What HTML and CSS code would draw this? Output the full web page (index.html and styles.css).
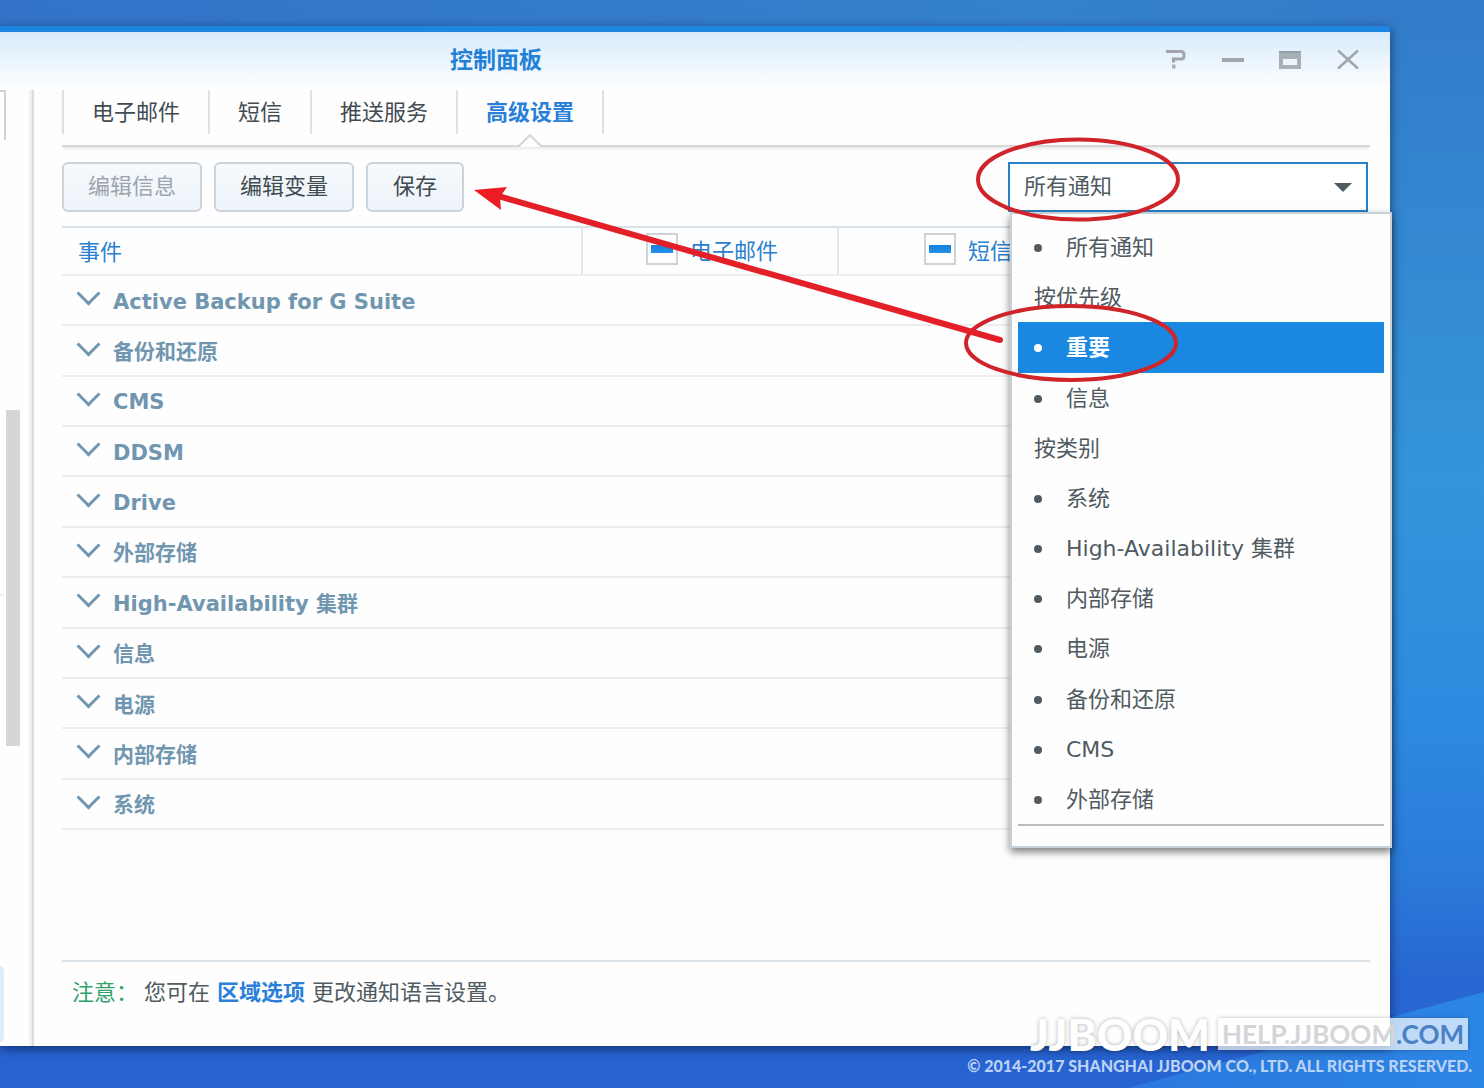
FILE: index.html
```html
<!DOCTYPE html>
<html lang="zh-CN">
<head>
<meta charset="utf-8">
<title>控制面板</title>
<link rel="stylesheet" href="styles.css">
</head>
<body>
<main class="window">
  <header class="titlebar">
    <h1 class="title">控制面板</h1>
    <div class="window-tools">
      <button class="tool" type="button"><svg width="24" height="24" viewBox="0 0 24 24"><path d="M4 3.500H19Q22 3.500 22 6.500V8Q22 11 19 11H11.500V14.500" fill="none" stroke="#9fa5ab" stroke-width="3"/><path d="M10 16.500h3.500v4H10z" fill="#a8aeb4"/></svg></button>
      <button class="tool" type="button"><svg width="24" height="24" viewBox="0 0 24 24"><path d="M2 10h22v4H2z" fill="#a0a6ac"/></svg></button>
      <button class="tool" type="button"><svg width="24" height="24" viewBox="0 0 24 24"><path fill-rule="evenodd" d="M1 3h22v18H1zM5 11v6h14v-6z" fill="#a8b0b7"/><path d="M1 3h22v2H1z" fill="#949ca4"/></svg></button>
      <button class="tool" type="button"><svg width="24" height="24" viewBox="0 0 24 24"><path d="M2 2.500L22 20.500M22 2.500L2 20.500" fill="none" stroke="#a0a6ac" stroke-width="2.500"/></svg></button>
    </div>
  </header>
  <div class="body">
    <aside class="sidebar">
      <span class="side-search"></span>
      <span class="side-rule"></span>
      <span class="side-thumb"></span>
      <span class="side-active"></span>
    </aside>
    <section class="content">
      <nav class="tabs">
        <a class="tab" href="#">电子邮件</a>
        <a class="tab" href="#">短信</a>
        <a class="tab" href="#">推送服务</a>
        <a class="tab tab-current" href="#">高级设置<svg class="notch" width="26" height="16" viewBox="0 0 26 16"><path d="M0 13V12H2L13 1L24 12H26V13Z" fill="#fefefe"/><path d="M0 12H2L13 1L24 12H26" fill="none" stroke="#d3d5d7" stroke-width="2"/></svg></a>
      </nav>
      <div class="toolbar">
        <button class="btn" type="button" disabled>编辑信息</button>
        <button class="btn" type="button">编辑变量</button>
        <button class="btn" type="button">保存</button>
        <div class="filter">
          <select class="filter-select" aria-label="所有通知"><option>所有通知</option></select>
          <svg class="filter-arrow" width="20" height="12" viewBox="0 0 20 12"><path d="M1 1H19L10 10Z" fill="#505a61"/></svg>
          <ul class="menu">
            <li class="item">所有通知</li>
            <li class="group">按优先级</li>
            <li class="item item-active">重要</li>
            <li class="item">信息</li>
            <li class="group">按类别</li>
            <li class="item">系统</li>
            <li class="item">High-Availability 集群</li>
            <li class="item">内部存储</li>
            <li class="item">电源</li>
            <li class="item">备份和还原</li>
            <li class="item">CMS</li>
            <li class="item">外部存储</li>
          </ul>
        </div>
      </div>
      <table class="events">
        <colgroup><col class="col-event"><col class="col-channel"><col class="col-channel"><col></colgroup>
        <thead>
          <tr>
            <th class="head-event">事件</th>
            <th><label class="check"><input class="box" type="checkbox"><span>电子邮件</span></label></th>
            <th><label class="check"><input class="box" type="checkbox"><span>短信</span></label></th>
            <th></th>
          </tr>
        </thead>
        <tbody>
          <tr><td colspan="4"><span class="event">Active Backup for G Suite</span></td></tr>
          <tr><td colspan="4"><span class="event">备份和还原</span></td></tr>
          <tr><td colspan="4"><span class="event">CMS</span></td></tr>
          <tr><td colspan="4"><span class="event">DDSM</span></td></tr>
          <tr><td colspan="4"><span class="event">Drive</span></td></tr>
          <tr><td colspan="4"><span class="event">外部存储</span></td></tr>
          <tr><td colspan="4"><span class="event">High-Availability 集群</span></td></tr>
          <tr><td colspan="4"><span class="event">信息</span></td></tr>
          <tr><td colspan="4"><span class="event">电源</span></td></tr>
          <tr><td colspan="4"><span class="event">内部存储</span></td></tr>
          <tr><td colspan="4"><span class="event">系统</span></td></tr>
        </tbody>
      </table>
      <footer class="note"><span class="note-label">注意：</span><p class="note-text">您可在 <a href="#">区域选项</a> 更改通知语言设置。</p></footer>
    </section>
  </div>
</main>
<svg class="marks" width="720" height="260" viewBox="0 0 720 260" fill="none">
  <ellipse cx="608" cy="49.500" rx="100" ry="40" stroke="#d0242b" stroke-width="4"/>
  <ellipse cx="601" cy="213" rx="105" ry="37" stroke="#d0242b" stroke-width="4"/>
  <path d="M530 210L30 66.500" stroke="#e32027" stroke-width="6" stroke-linecap="round"/>
  <path d="M4 60L37 57L30 67L31 80Z" fill="#ed1c24"/>
</svg>
<div class="watermark">
  <div class="brand"><span class="brand-name">JJBOOM</span><span class="brand-site">HELP.JJBOOM<span class="brand-tld">.COM</span></span></div>
  <div class="copyright">© 2014-2017 SHANGHAI JJBOOM CO., LTD. ALL RIGHTS RESERVED.</div>
</div>
</body>
</html>
```
FILE: styles.css
```css
* { box-sizing: border-box; }

body {
  margin: 0;
  min-height: 100vh;
  display: flex;
  flex-direction: column;
  position: relative;
  padding: 26px 94px 42px 0;
  font: 22px/32px "DejaVu Sans", "Noto Sans CJK SC", sans-serif;
  color: #505a61;
  background:
    linear-gradient(to right, #3273c8, #3581cb 70%, #337ac8) top / 100% 30px no-repeat,
    linear-gradient(to bottom, #337bc9, #3490d5 35%, #3494da 45%, #2d8adf 66%, #2b7bd9 80%, #2867d2 90%, #2763d2);
}

body::before {
  content: "";
  position: absolute;
  right: 0;
  bottom: 0;
  width: 356px;
  height: 96px;
  background: linear-gradient(to right, #2a78de, #2c86e5);
  clip-path: polygon(100% 0, 100% 100%, 0 100%);
}

button, select { font: inherit; color: inherit; }

.window {
  flex: 1;
  display: flex;
  flex-direction: column;
  position: relative;
  border-top: 6px solid #1b85e0;
  background: #fefefe;
  box-shadow: 0 3px 10px rgba(0, 15, 50, .6);
}

.titlebar {
  display: grid;
  grid-template-columns: 1fr auto;
  align-items: center;
  height: 58px;
  padding: 0 30px 2px 450px;
  background: linear-gradient(#d8ebfb, #fefefe);
}

.title { margin: 0; font-size: 23px; line-height: 32px; font-weight: 700; color: #2380d8; }
.window-tools { display: flex; gap: 34px; }
.tool { width: 24px; height: 24px; padding: 0; border: 0; background: none; }
.tool svg { display: block; }

.body { flex: 1; display: flex; }

.sidebar {
  width: 34px;
  display: flex;
  flex-direction: column;
  border-right: 2px solid #dcdcdd;
  box-shadow: inset -4px 0 4px -3px #ddd;
}
.side-search { width: 6px; height: 50px; border: solid #cbd3da; border-width: 2px 2px 0 0; }
.side-rule { width: 4px; height: 2px; margin-top: 454px; background: #ebeef0; }
.side-thumb { width: 14px; height: 336px; margin: -186px 0 0 6px; background: #d4d6d8; }
.side-active { width: 4px; flex: 1; margin: 220px 0 4px; border-radius: 0 4px 4px 0; background: #dceefb; }

.content {
  flex: 1;
  display: flex;
  flex-direction: column;
  padding: 0 20px 0 28px;
}

.tabs {
  display: flex;
  height: 57px;
  border-bottom: 2px solid #d6d7d8;
  box-shadow: 0 3px 3px -1px #e9e9e9;
}
.tab {
  position: relative;
  height: 44px;
  padding: 0 28px;
  border-left: 2px solid #dae1e6;
  line-height: 46px;
  color: #414b52;
  text-decoration: none;
}
.tab-current { border-right: 2px solid #dae1e6; font-weight: 700; color: #2a80d8; }
.notch { position: absolute; top: 44px; left: 50%; margin-left: -13px; }

.toolbar { display: flex; gap: 12px; padding: 15px 2px 14px 0; }
.btn {
  height: 50px;
  min-width: 98px;
  padding: 0 24px;
  border: 2px solid #cad3da;
  border-radius: 6px;
  background: linear-gradient(#f6fafd, #edf3f9);
  color: #414b52;
}
.btn:disabled { color: #9ca4ac; }

.filter { position: relative; width: 360px; margin-left: auto; }
.filter-select {
  display: block;
  width: 100%;
  height: 50px;
  padding: 0 14px;
  appearance: none;
  border: 2px solid #2c80c4;
  border-radius: 0;
  background: #fff;
}
.filter-arrow { position: absolute; right: 15px; top: 20px; }

.menu {
  position: absolute;
  z-index: 2;
  top: 50px;
  left: 2px;
  width: 382px;
  height: 636px;
  margin: 0;
  padding: 8px 6px 20px;
  list-style: none;
  display: flex;
  flex-direction: column;
  border: 2px solid #c8d1da;
  background: #fefefe;
  box-shadow: 0 4px 8px rgba(0, 0, 0, .5);
}
.menu::after { content: ""; height: 2px; background: #babdbf; }
.item, .group { flex: 1; display: flex; align-items: center; padding: 2px 16px 0; }
.item::before {
  content: "";
  width: 8px;
  height: 8px;
  margin-right: 24px;
  border-radius: 50%;
  background: currentColor;
}
.item-active { background: #1a87e1; color: #fff; font-weight: 700; }

.events {
  width: 100%;
  height: 604px;
  border-collapse: collapse;
  table-layout: fixed;
  border-top: 2px solid #d9e1e8;
}
.col-event { width: 520px; }
.col-channel { width: 256px; }
.events th {
  height: 48px;
  padding: 2px 0 0;
  border-bottom: 2px solid #ebeef0;
  border-right: 2px solid #e1e8ed;
  font-weight: 400;
  color: #2a80d0;
}
.events th:last-child { border-right: 0; }
.events .head-event { padding: 4px 16px 0; text-align: left; }
.check { display: flex; justify-content: center; align-items: center; gap: 12px; padding-left: 4px; }
.box {
  width: 32px;
  height: 32px;
  margin: 0 0 6px;
  appearance: none;
  border: 2px solid #ccd4da;
  background: linear-gradient(#1680dc, #2492ea) center / 22px 8px no-repeat;
}
.events td { padding: 3px 14px 0; border-bottom: 2px solid #ebeef0; }
.event { display: flex; align-items: center; gap: 14px; font-size: 21px; font-weight: 700; color: #7096b0; }
.event::before {
  content: "";
  width: 14px;
  height: 14px;
  margin: -16px 2px 0 4px;
  border: solid #7096b0;
  border-width: 0 3px 3px 0;
  transform: rotate(45deg);
}

.note {
  display: flex;
  gap: 6px;
  margin-top: auto;
  padding: 15px 10px 37px;
  border-top: 2px solid #dae1e7;
}
.note-label { color: #30a06c; }
.note-text { margin: 0; }
.note-text a { color: #2a80d8; font-weight: 700; text-decoration: none; }

.marks { position: absolute; z-index: 3; top: 130px; left: 470px; }

.watermark {
  position: absolute;
  z-index: 4;
  right: 12px;
  bottom: 10px;
  font-family: Lato, sans-serif;
  color: #fff;
}
.brand { display: flex; justify-content: flex-end; gap: 8px; padding-right: 4px; }
.brand-name { font-size: 44px; font-weight: 900; line-height: 32px; text-shadow: 0 0 4px rgba(0, 0, 0, .3); }
.brand-site {
  height: 32px;
  padding: 0 4px;
  font-size: 26px;
  font-weight: 700;
  line-height: 32px;
  color: #d3d5d8;
  background: rgba(255, 255, 255, .7);
  box-shadow: 0 0 4px rgba(0, 0, 0, .25);
}
.brand-tld { color: #4a80c6; }
.copyright { margin-top: 4px; font-size: 16px; font-weight: 900; line-height: 24px; text-align: right; color: #bcd2f4; }
```
